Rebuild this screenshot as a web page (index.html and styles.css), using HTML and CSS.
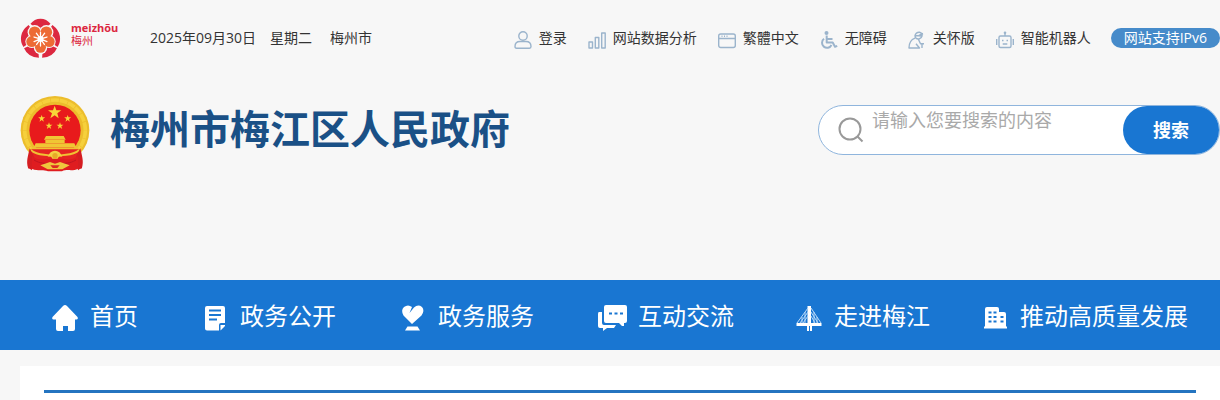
FILE: index.html
```html
<!DOCTYPE html>
<html lang="zh-CN">
<head>
<meta charset="utf-8">
<title>梅州市梅江区人民政府</title>
<link rel="stylesheet" href="styles.css">
</head>
<body>
<header class="header">
  <div class="topbar">
    <a class="city-logo" href="#">
      <svg class="city-mark" viewBox="28 28 126 124" aria-hidden="true">
        <g fill="#dc2840"><path d="M60 46Q72 30 91 30t31 16l-31 30zM54 50l28 38-44 30Q28 103 31 84t23-34zM128 50l-28 38 44 30q10-15 7-34t-23-34zM40 122l42-20 4 49Q52 150 40 122zM142 122l-42-20-4 49q34-1 46-29z"/></g>
        <g fill="#f7f7f7"><circle cx="73" cy="72" r="22"/><circle cx="109" cy="72" r="22"/><circle cx="64" cy="101" r="20"/><circle cx="118" cy="101" r="20"/><circle cx="91" cy="119" r="21"/></g>
        <g fill="#ed6b35"><circle cx="73" cy="72" r="18"/><circle cx="109" cy="72" r="18"/><circle cx="64" cy="101" r="17"/><circle cx="118" cy="101" r="17"/><circle cx="91" cy="119" r="17"/><circle cx="91" cy="93" r="24"/></g>
        <path d="M91 93V72M91 93l-13-18M91 93l13-18M91 93l-20-6M91 93l20-6M91 93l-20 8M91 93l20 8M91 93l-12 17M91 93l12 17M91 93v22" stroke="#fff" stroke-width="4" stroke-linecap="round"/>
        <circle cx="91" cy="93" r="9" fill="#fff"/>
      </svg>
      <span class="city-name"><span class="city-latin">meizhõu</span><span class="city-han">梅州</span></span>
    </a>
    <div class="today"><span>2025年09月30日</span><span>星期二</span><span class="place">梅州市</span></div>
    <nav class="tools" aria-label="工具">
      <a class="tool" href="#"><svg class="tool-icon" viewBox="0 0 18 18"><circle cx="9" cy="5" r="4.2"/><path d="M1 15.500q0-5 5-5h6q5 0 5 5 0 1.700-1.500 1.700h-13Q1 17.200 1 15.500z"/></svg>登录</a>
      <a class="tool" href="#"><svg class="tool-icon" viewBox="0 0 18 18"><path d="M1 11h3.500v6H1zM7.300 6.500h3.500V17H7.300zM13.700 2h3.500v15h-3.500z"/></svg>网站数据分析</a>
      <a class="tool" href="#"><svg class="tool-icon" viewBox="0 0 18 18"><rect x=".7" y="3" width="16.600" height="13.500" rx="2"/><path d="M1 7.500h16M3.500 5.300h1M6 5.300h1M8.500 5.300h1"/></svg>繁體中文</a>
      <a class="tool" href="#"><svg class="tool-icon" viewBox="0 0 18 18"><circle class="solid" cx="6.500" cy="2" r="2"/><path class="bold" d="M6.700 4.500v7h6l2.300 4.300 2.200-1M7 8h5.500M4 7.800A5 5 0 1 0 11.500 14"/></svg>无障碍</a>
      <a class="tool" href="#"><svg class="tool-icon" viewBox="0 0 18 18"><path d="M7 4.500q1-3.500 4.500-3.300Q14.800 2 14 5L7 4.500zM7 5q.5 3.500 4 3 2.500-.7 3-3M11 4.500l4-2M7 7.200Q1 9.500 1 17h10.500L8 12.800M10.500 8.500l2 4.200H16M14 12.700V17"/></svg>关怀版</a>
      <a class="tool" href="#"><svg class="tool-icon" viewBox="0 0 18 18"><rect x="3" y="5" width="12" height="11.500" rx="1.500"/><path d="M9 5V2M.7 8v6M17.300 8v6M6 9.500h1.500M10.500 9.500H12M6.700 13h4.600"/><circle class="solid" cx="9" cy="1.700" r="1.300"/></svg>智能机器人</a>
    </nav>
    <a class="badge" href="#">网站支持IPv6</a>
  </div>
  <div class="brand">
    <a class="site" href="#">
      <svg class="emblem" viewBox="30 18 210 228" aria-hidden="true">
        <circle cx="135" cy="121" r="103" fill="#ecbd2c"/>
        <circle cx="135" cy="121" r="91" fill="none" stroke="#f6d03c" stroke-width="11" stroke-dasharray="24 2"/>
        <circle cx="135" cy="121" r="77" fill="#e81a1c"/>
        <g fill="#f7d638"><path d="M134 47l5 14 15 0-12 9 4 15-12-9-13 9 5-15-12-9h15z"/><path id="star" d="M95 75l2.500 7h8l-6.500 5 2.500 8-6.500-5-6.500 5 2.500-8-6.500-5h8z"/><use href="#star" x="78"/><use href="#star" x="22" y="22"/><use href="#star" x="55" y="22"/></g>
        <path d="M108 138h53l6 11h-65zM106 150h58v9h-58zM77 160h116l5 11H72z" fill="#f0c634"/>
        <path d="M62 177h146v25l-38 18h-70l-38-18z" fill="#e42422"/>
        <path d="M64 175h142M62 180c22 18 38 12 58 17h30c20-5 36 1 58-17" fill="none" stroke="#f0c233" stroke-width="6"/>
        <path d="M59 175l12 23c-3 21 0 35-6 43-4-7-10-3-11-8-6-18 0-35 5-58zM211 175l-12 23c3 21 0 35 6 43 4-7 10-3 11-8 6-18 0-35-5-58z" fill="#d51d21"/>
        <path d="M66 198c15 12 31 12 46 8h46c15 4 31 4 46-8v38c-15 9-35 0-48 8h-42c-15-7-30 1-48-8z" fill="#df1c20"/>
        <path d="M72 210c20 12 31 8 49 13h28c18-5 29-1 49-13" fill="none" stroke="#bd1520" stroke-width="3"/>
        <path d="M113 200q7-18 22-18t22 18l-9-3-5 9h-16l-5-9z" fill="#f3cf42"/>
        <circle cx="135" cy="197" r="8" fill="#e7a927"/>
        <path d="M91 226l29-10 15 5 15-5 29 10-22 12h-44z" fill="#efc63d"/><path d="M121 226h28l-7 8h-14z" fill="#dc2922"/>
      </svg>
      <h1 class="site-name">梅州市梅江区人民政府</h1>
    </a>
    <form class="search">
      <svg class="search-icon" viewBox="0 0 26 26" aria-hidden="true"><circle cx="12" cy="12" r="10.500"/><path d="M19.500 19.500l5 5"/></svg>
      <input class="search-input" type="text" aria-label="搜索内容" placeholder="请输入您要搜索的内容">
      <button class="search-button" type="button">搜索</button>
    </form>
  </div>
</header>
<nav class="main-nav" aria-label="主导航">
  <a class="nav-link" href="#"><svg class="nav-icon" viewBox="0 0 30 30"><path d="M15 2Q16 2 17 3l10.500 11q1 2-1 2.500H25V26q0 2-2 2h-5v-5h-5v5H8q-2 0-2-2v-9.500H3.500q-2-.5-1-2.500L13 3q1-1 2-1z"/></svg>首页</a>
  <a class="nav-link" href="#"><svg class="nav-icon" viewBox="0 0 30 30"><path d="M7 3h16q2 0 2 2v15h-4q-2 0-2 2v5.500H7q-2 0-2-2V5q0-2 2-2zM20.500 22H25v1l-4.500 4.500z"/><path class="cut" d="M9 7.500h12M9 12h12M9 16.500h8"/></svg>政务公开</a>
  <a class="nav-link" href="#"><svg class="nav-icon" viewBox="0 0 30 30"><path d="M14 21L5.500 12.500Q2.500 7 6 4q4-3 8 0l-2.500 6L16 4.500q4-3.500 8-.5 3 3.500-.5 8.500zM9.500 23.500h10l2.500 4H7z"/></svg>政务服务</a>
  <a class="nav-link" href="#"><svg class="nav-icon" viewBox="0 0 30 30"><path d="M8 2h19q2 0 2 2v14q0 2-2 2h-1v3h-2l-3-3H8q-2 0-2-2V4q0-2 2-2z"/><path d="M1 9h3v11q0 2 2 2h12l-2 3H9l-4 3v-3H2q-2 0-2-2V11q0-2 1-2z"/><path class="cut" d="M11 10.500h3M16.500 10.500h3M22 10.500h3"/></svg>互动交流</a>
  <a class="nav-link" href="#"><svg class="nav-icon" viewBox="0 0 30 30"><path d="M13.500 3h3.500v17h10.500v3H18v5h-2v-5h-1v5h-2v-5H2.500v-3h11z"/><path class="cable" d="M14 5L3 20M14 9L6 20M14 13l-5 7M17 5l10 15M17 9l7 11M17 13l4 7M11 9v11M8 14v6M20 9v11M23 14v6"/></svg>走进梅江</a>
  <a class="nav-link" href="#"><svg class="nav-icon" viewBox="0 0 30 30"><path d="M7 4h10q2 0 2 2v3h5q2 0 2 2v12.500h1v2H4v-2h1V6q0-2 2-2z"/><path class="cut" d="M8.500 9.500h3M13.500 9.500h3M8.500 14h3M13.500 14h3M8.500 18.500h3M13.500 18.500h3M20.500 14h3M20.500 18.500h3"/></svg>推动高质量发展</a>
</nav>
<main class="panel"><hr class="panel-line"></main>
</body>
</html>
```
FILE: styles.css
```css
* { box-sizing: border-box; }
body {
  margin: 0;
  background: #f7f7f7;
  color: #333;
  font: 14px/20px "Open Sans", "Noto Sans CJK SC", sans-serif;
}
a { color: inherit; text-decoration: none; }
.header { padding-left: 20px; height: 280px; }
.topbar { display: flex; align-items: center; height: 76px; }
.city-logo { display: flex; width: 130px; gap: 10px; color: #dc2840; }
.city-mark { width: 41px; height: 40px; }
.city-name { display: flex; flex-direction: column; padding-top: 3px; }
.city-latin { font-size: 11px; line-height: 14px; font-weight: 700; }
.city-han { font-size: 11px; line-height: 12px; }
.today { display: flex; gap: 14px; }
.place { padding-left: 4px; }
.tools { display: flex; gap: 21px; margin-left: auto; padding-right: 20px; }
.tool { display: flex; gap: 7px; white-space: nowrap; }
.tool-icon {
  width: 18px;
  height: 18px;
  margin-top: 3px;
  fill: none;
  stroke: #9bb4cc;
  stroke-width: 1.4;
  stroke-linejoin: round;
}
.tool-icon .solid { fill: #9bb4cc; stroke: none; }
.tool-icon .bold { stroke-width: 2; }
.badge {
  padding: 0 13px;
  border-radius: 10px;
  background: #468bca;
  color: #fff;
  white-space: nowrap;
}
.brand { display: flex; align-items: flex-start; justify-content: space-between; padding-top: 20px; }
.site { display: flex; align-items: flex-start; gap: 20px; }
.emblem { width: 70px; height: 76px; }
.site-name { margin: 0; padding-top: 4px; color: #1a5086; font-size: 40px; line-height: 58px; font-weight: 700; }
.search {
  display: flex;
  width: 402px;
  height: 50px;
  margin-top: 9px;
  padding-left: 19px;
  border: 1px solid #8fb5dd;
  border-radius: 25px;
  background: #fff;
}
.search-icon { width: 26px; height: 26px; margin: 11px 8px 0 0; fill: none; stroke: #999; stroke-width: 2; }
.search-input {
  flex: 1;
  min-width: 0;
  height: 28px;
  padding: 0;
  border: 0;
  outline: 0;
  background: none;
  font: inherit;
  font-size: 18px;
}
.search-input::placeholder { color: #a9a9a9; opacity: 1; }
.search-button {
  width: 96px;
  border: 0;
  border-radius: 24px;
  background: #1976d2;
  color: #fff;
  font: inherit;
  font-size: 18px;
  font-weight: 700;
}
.main-nav {
  display: grid;
  grid-template-columns: 37fr 50fr 49fr 51fr 47fr 64fr;
  padding: 2px 8px 0 20px;
  background: #1976d2;
  color: #fff;
  font-size: 24px;
  line-height: 68px;
}
.nav-link { display: flex; justify-content: center; gap: 10px; white-space: nowrap; }
.nav-icon { width: 30px; height: 30px; margin-top: 21px; fill: #fff; }
.nav-icon .cut { fill: none; stroke: #1976d2; stroke-width: 2; }
.nav-icon .cable { fill: none; stroke: #b9dafa; stroke-width: 1; }
.panel { min-height: 34px; margin: 16px 0 0 20px; padding: 24px 24px 7px; background: #fff; }
.panel-line { height: 3px; margin: 0; border: 0; background: #2474c0; }
```
